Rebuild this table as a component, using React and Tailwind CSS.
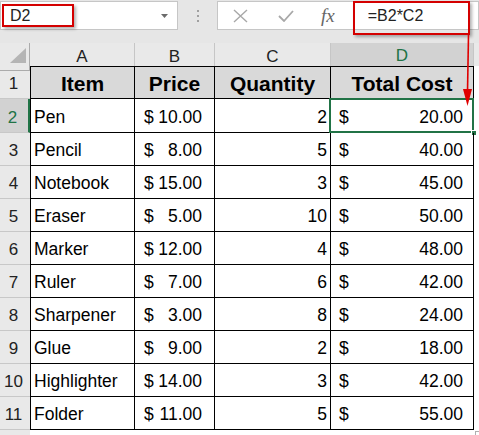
import React from "react";

const data = [
  ["Pen", "10.00", 2, "20.00"],
  ["Pencil", "8.00", 5, "40.00"],
  ["Notebook", "15.00", 3, "45.00"],
  ["Eraser", "5.00", 10, "50.00"],
  ["Marker", "12.00", 4, "48.00"],
  ["Ruler", "7.00", 6, "42.00"],
  ["Sharpener", "3.00", 8, "24.00"],
  ["Glue", "9.00", 2, "18.00"],
  ["Highlighter", "14.00", 3, "42.00"],
  ["Folder", "11.00", 5, "55.00"],
];

const cols = "grid grid-cols-[30px_105px_80px_116px_143px_1fr]";

function RowHead({ n, selected }) {
  return (
    <div
      className={
        "flex items-end justify-center pr-[3px] pb-[4px] text-[17px] leading-[20px] border-b border-[#c8c8c8] " +
        (selected
          ? "bg-[#d2d2d2] text-[#217346] border-r-2 border-r-[#217346]"
          : "bg-[#e9e9e9] text-[#222]")
      }
    >
      {n}
    </div>
  );
}

export default function App() {
  return (
    <div className="relative w-[479px] h-[435px] overflow-hidden bg-[#e6e6e6] font-['Liberation_Sans',Arial,sans-serif] text-black">
      {/* Formula bar */}
      <div className="flex h-[43px] items-start pt-[1px]">
        <div className="relative flex h-[29px] w-[178px] items-center justify-between border border-[#c6c6c6] bg-white pl-[9px] pr-[9px]">
          <span className="text-[16px] text-[#222]">D2</span>
          <svg width="7" height="4" viewBox="0 0 7 4">
            <path d="M0 0 L7 0 L3.5 4 Z" fill="#6b6b6b" />
          </svg>
        </div>
        <div className="flex h-[29px] w-[39px] flex-col items-center justify-center gap-[3px]">
          <span className="h-[2px] w-[2px] bg-[#a0a0a0]" />
          <span className="h-[2px] w-[2px] bg-[#a0a0a0]" />
          <span className="h-[2px] w-[2px] bg-[#a0a0a0]" />
        </div>
        <div className="flex h-[29px] flex-1 items-center border border-[#c6c6c6] bg-white">
          <div className="ml-[14px] flex w-[16px] justify-center">
            <svg width="15" height="14" viewBox="0 0 15 14">
              <path d="M1 1 L14 13 M14 1 L1 13" stroke="#a8a8a8" strokeWidth="1.4" fill="none" />
            </svg>
          </div>
          <div className="ml-[30px] flex w-[16px] justify-center">
            <svg width="16" height="12" viewBox="0 0 16 12">
              <path d="M1 6 L6 11 L15 1" stroke="#a8a8a8" strokeWidth="1.8" fill="none" />
            </svg>
          </div>
          <span className="ml-[27px] font-['Liberation_Serif',serif] text-[19px] italic text-[#666] leading-none">
            fx
          </span>
          <span className="ml-[33px] text-[16px] text-[#222]">=B2*C2</span>
        </div>
      </div>

      {/* Sheet */}
      <div className="flex flex-col bg-white">
        {/* Column headers */}
        <div className={cols + " h-[23px] bg-[#e9e9e9] text-[17px] text-[#222]"}>
          <div className="relative border-r border-b border-[#ababab]">
            <svg className="absolute left-[10px] top-[5px]" width="17" height="16" viewBox="0 0 17 16">
              <path d="M0 15 L16 15 L16 0 Z" fill="#b5b5b5" />
            </svg>
          </div>
          {["A", "B", "C"].map((c) => (
            <div key={c} className="flex items-center justify-center border-r border-b border-r-[#c6c6c6] border-b-[#ababab]">
              {c}
            </div>
          ))}
          <div className="flex items-center justify-center border-r border-r-[#c6c6c6] border-b-2 border-b-[#217346] bg-[#d2d2d2] text-[#217346]">
            D
          </div>
          <div className="border-b border-[#ababab]" />
        </div>

        {/* Row 1 header */}
        <div className={cols + " h-[33px]"}>
          <RowHead n={1} />
          {["Item", "Price", "Quantity", "Total Cost"].map((h, i) => (
            <div
              key={h}
              className={
                "flex items-end justify-center bg-[#d9d9d9] pb-[2px] text-[21px] font-bold leading-[24px] border-t border-r border-b border-black " +
                (i === 0 ? "border-l" : "")
              }
            >
              {h}
            </div>
          ))}
          <div className="bg-white" />
        </div>

        {data.map((r, idx) => {
          const sel = idx === 0;
          return (
            <div key={r[0]} className={cols + (sel ? " h-[34px]" : " h-[33px]")}>
              <RowHead n={idx + 2} selected={sel} />
              <div className="flex items-end border-l border-r border-b border-black pl-[3px] pb-[5px] text-[17.5px] leading-[20px]">
                {r[0]}
              </div>
              <div className="flex items-end justify-between border-r border-b border-black pl-[9px] pr-[12px] pb-[5px] text-[17.5px] leading-[20px]">
                <span>$</span>
                <span>{r[1]}</span>
              </div>
              <div className="flex items-end justify-end border-r border-b border-black pr-[3px] pb-[5px] text-[17.5px] leading-[20px]">
                {r[2]}
              </div>
              <div className="relative flex items-end justify-between border-r border-b border-black pl-[8px] pr-[10px] pb-[5px] text-[17.5px] leading-[20px]">
                <span>$</span>
                <span>{r[3]}</span>
                {sel && (
                  <>
                    <div className="absolute left-[-2px] top-[-1px] right-[-1px] bottom-[-1px] border-2 border-[#217346]" />
                    <div className="absolute right-[-4px] bottom-[-4px] h-[6px] w-[6px] border border-white bg-[#217346]" />
                  </>
                )}
              </div>
              <div className="bg-white" />
            </div>
          );
        })}

        {/* Filler */}
        <div className={cols + " h-[10px]"}>
          <div className="bg-[#e9e9e9]" />
          <div className="col-span-5 bg-white" />
        </div>
      </div>

      {/* Red annotations */}
      <div className="absolute left-[2px] top-[4px] h-[23px] w-[72px] border-2 border-[#d40000] shadow-[2px_2px_3px_rgba(0,0,0,0.3)]" />
      <div className="absolute left-[353px] top-[1px] h-[34px] w-[117px] border-2 border-[#d40000] shadow-[2px_2px_3px_rgba(0,0,0,0.3)]" />
      <svg className="absolute left-0 top-0" width="479" height="435" viewBox="0 0 479 435">
        <path d="M468.5 35 L467.5 92" stroke="#e00000" strokeWidth="1.6" fill="none" />
        <path d="M463 89 L472 89 L467.5 106 Z" fill="#e00000" />
      </svg>
      <div className="absolute left-[475px] top-[431px] h-[4px] w-[4px] border-l border-t border-[#b0b0b0]" />
    </div>
  );
}
